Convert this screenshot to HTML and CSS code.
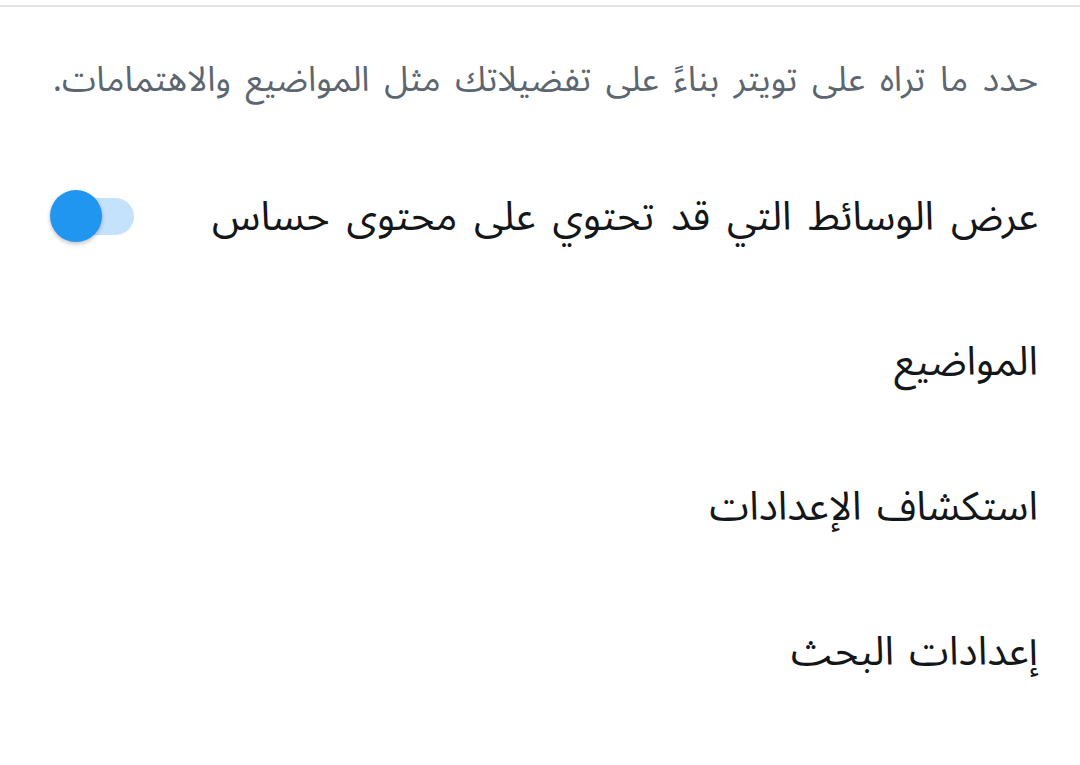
FILE: index.html
```html
<!DOCTYPE html>
<html lang="ar" dir="rtl">
<head>
<meta charset="utf-8">
<link rel="stylesheet" href="styles.css">
</head>
<body>
<div class="page">
  <p class="desc">حدد ما تراه على تويتر بناءً على تفضيلاتك مثل المواضيع والاهتمامات.</p>
  <div class="row">
    <span class="label label-long">عرض الوسائط التي قد تحتوي على محتوى حساس</span>
    <span class="switch"><span class="track"></span><span class="thumb"></span></span>
  </div>
  <div class="row"><span class="label">المواضيع</span></div>
  <div class="row"><span class="label">استكشاف الإعدادات</span></div>
  <div class="row"><span class="label">إعدادات البحث</span></div>
</div>
</body>
</html>
```
FILE: styles.css
```css
html, body {
  margin: 0;
  padding: 0;
  background: #ffffff;
}
body {
  width: 1080px;
  height: 765px;
  overflow: hidden;
  font-family: "Noto Sans Arabic", "DejaVu Sans", sans-serif;
}
.page {
  margin-top: 5px;
  border-top: 2px solid #e1e5e8;
  padding: 0 42px 0 50px;
}
.desc {
  margin: 49px 0 41px 0;
  font-size: 34.5px;
  line-height: 48px;
  word-spacing: 5.8px;
  color: #5b6670;
}
.row {
  display: flex;
  align-items: center;
  justify-content: space-between;
  height: 145px;
}
.label {
  font-size: 40px;
  word-spacing: 5px;
  color: #14171a;
}
.label-long {
  word-spacing: 6.5px;
}
.switch {
  position: relative;
  top: -2px;
  width: 84px;
  height: 52px;
  flex: none;
}
.track {
  position: absolute;
  left: 10px;
  right: 0;
  top: 8px;
  height: 37px;
  border-radius: 19px;
  background: #c4e2fb;
}
.thumb {
  position: absolute;
  left: 0;
  top: 0;
  width: 52px;
  height: 52px;
  border-radius: 50%;
  background: #2196f0;
  box-shadow: 0 2px 4px rgba(0,0,0,0.25);
}
```
